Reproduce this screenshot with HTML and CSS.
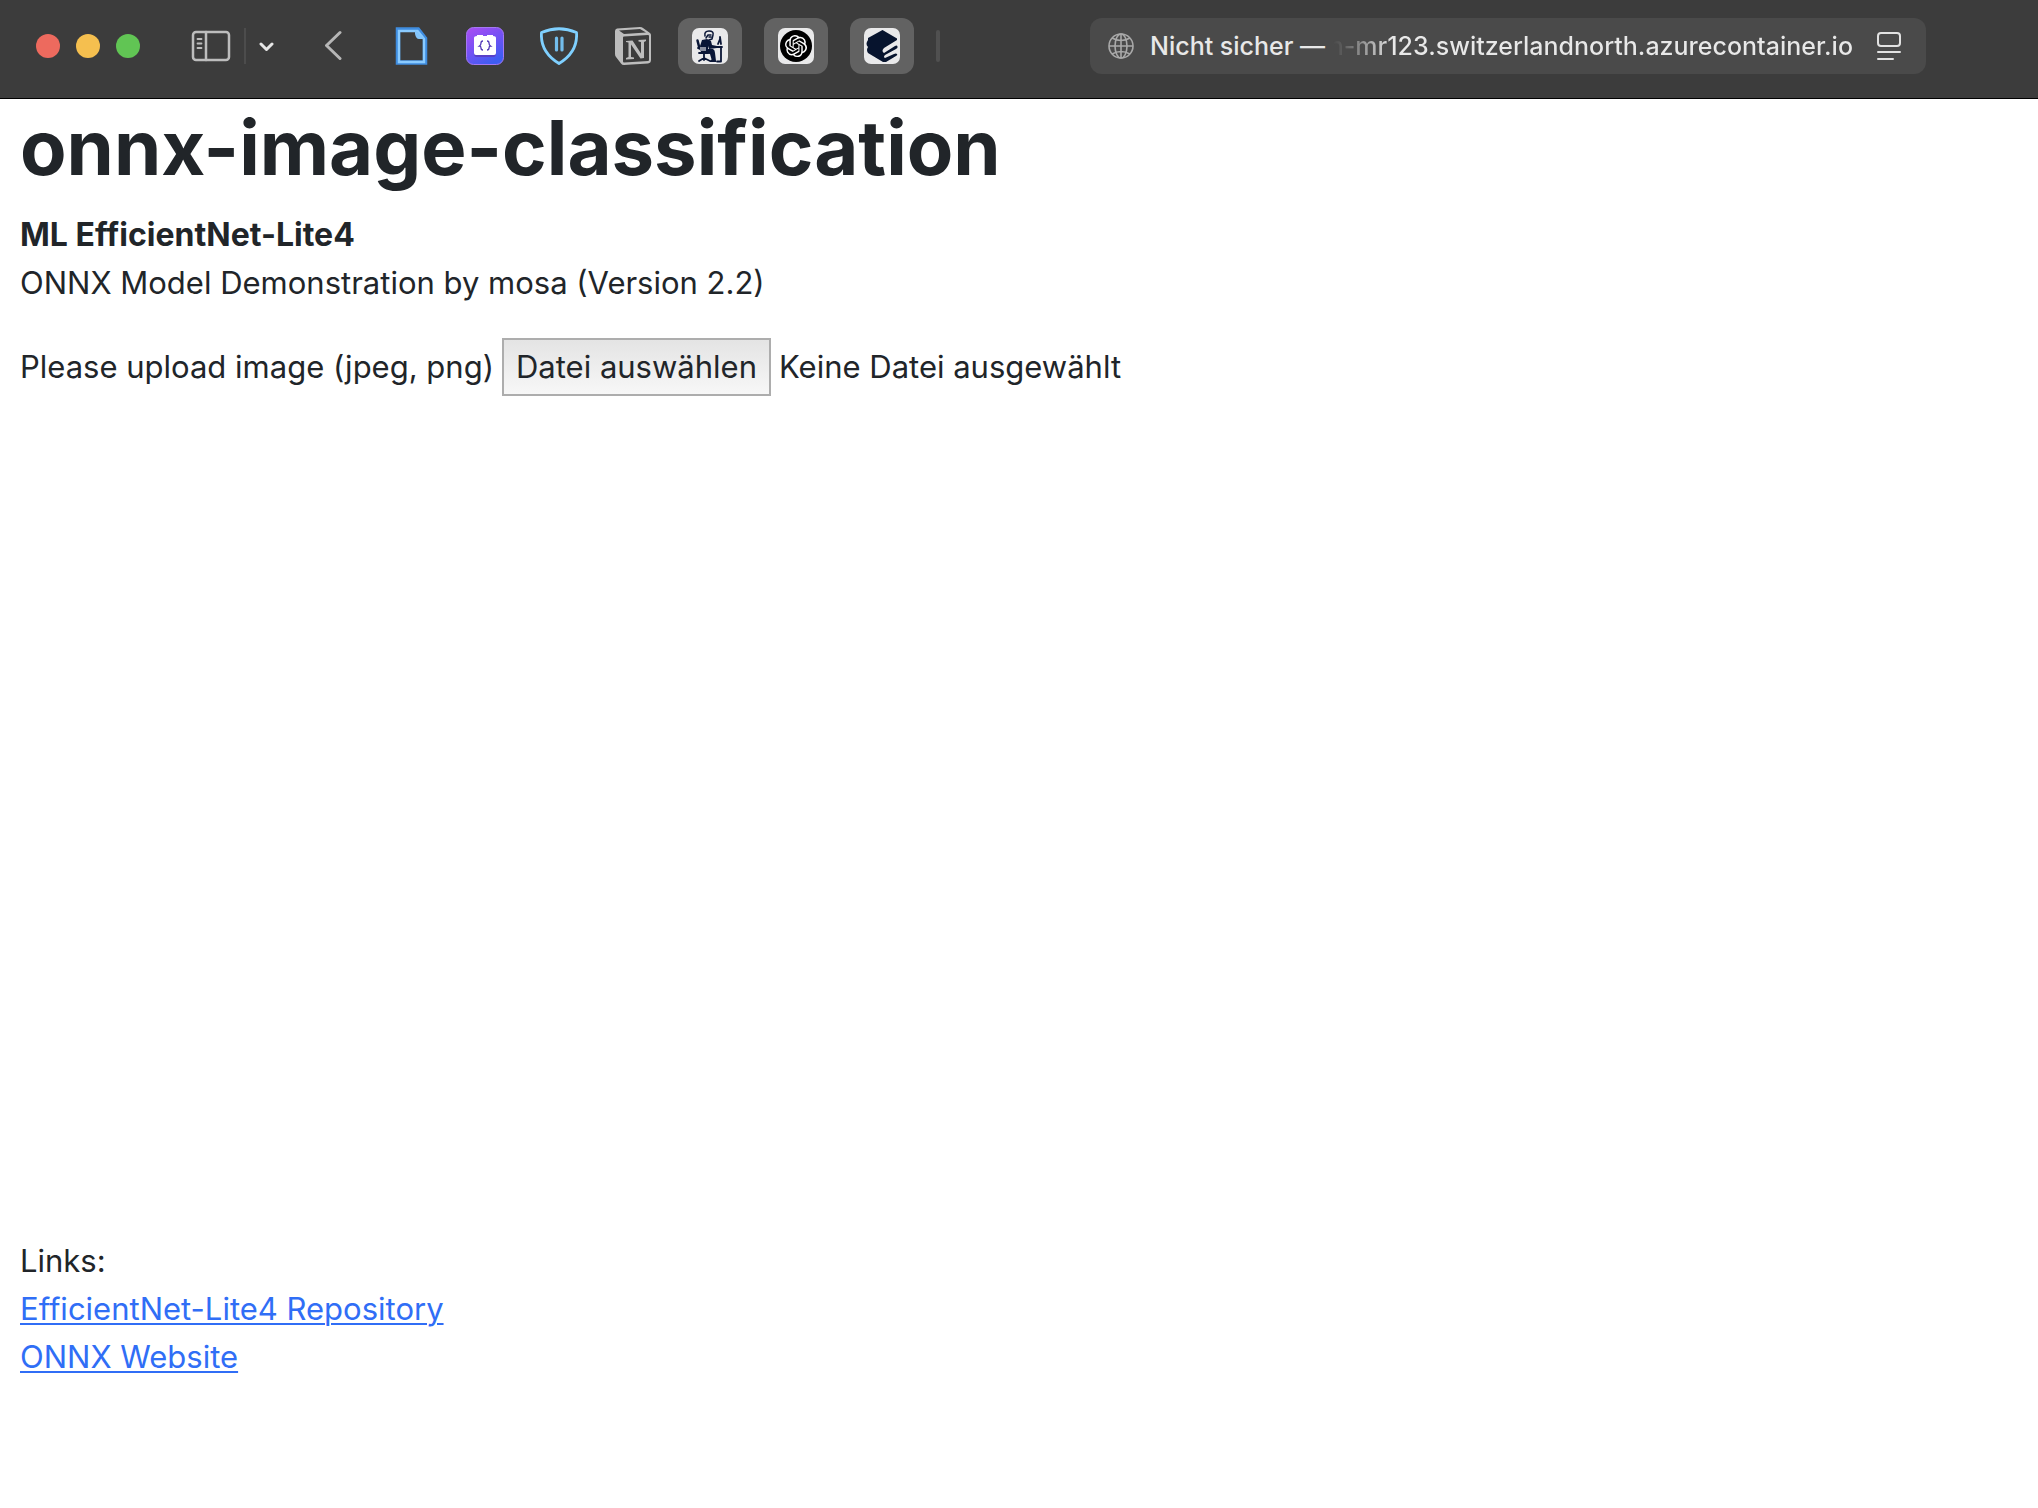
FILE: index.html
```html
<!DOCTYPE html>
<html lang="en">
<head>
<meta charset="utf-8">
<title>onnx-image-classification</title>
<link rel="stylesheet" href="styles.css">
</head>
<body>
<header class="toolbar">
  <div class="lights">
    <button class="light red" aria-label="Close"></button>
    <button class="light yellow" aria-label="Minimise"></button>
    <button class="light green" aria-label="Zoom"></button>
  </div>
  <div class="sidebar-group">
    <button class="tool" aria-label="Sidebar">
      <svg width="40" height="32" viewBox="0 0 40 32" fill="none" stroke="#bdbdbd" stroke-width="2.500" stroke-linecap="round"><rect x="2" y="2" width="36" height="28" rx="3"/><path d="M15 2v28"/><path d="M6.500 9h4M6.500 13.500h4M6.500 18h4" stroke-width="1.800"/></svg>
    </button>
    <span class="divider"></span>
    <button class="tool" aria-label="Tab groups">
      <svg width="16" height="36" viewBox="0 0 16 36" fill="none" stroke="#e6e6e6" stroke-width="3" stroke-linecap="round" stroke-linejoin="round"><path d="M2 16l5.500 5.500L13 16"/></svg>
    </button>
  </div>
  <button class="tool back" aria-label="Back">
    <svg width="18" height="32" viewBox="0 0 18 32" fill="none" stroke="#b6b6b6" stroke-width="3" stroke-linecap="round" stroke-linejoin="round"><path d="M15 2.500L1.500 15.500 15 28.500"/></svg>
  </button>
  <div class="extensions">
    <button class="tool" aria-label="Document">
      <svg width="38" height="38" viewBox="0 0 38 38" fill="none"><path d="M6 2.500H26l7 9v24H6z" stroke="#3f8de0" stroke-width="4.500"/><path d="M7 4h18.500l6.500 8v23H7z" stroke="#8acbff" stroke-width="2.400"/><path d="M23 3v4q1 5 4 5h6z" fill="#83c5fb"/></svg>
    </button>
    <button class="tool" aria-label="Snippets">
      <svg width="38" height="38" viewBox="0 0 38 38"><defs><linearGradient id="brick" x1="0" y1="0" x2=".6" y2="1"><stop offset="0" stop-color="#ad4df3"/><stop offset=".5" stop-color="#7950f4"/><stop offset="1" stop-color="#3e5df2"/></linearGradient></defs><rect x=".5" y=".5" width="37" height="37" rx="7" fill="url(#brick)" stroke="#a478f2"/><path d="M8 13h22v14q0 3-3 3H11q-3 0-3-3z" fill="#5840c8"/><path d="M8 11q0-2 3-2V8h6v1h4V8h6v1q3 0 3 2v15q0 2-2 2H10q-2 0-2-2z" fill="#fff"/><path d="M17 14q-2 0-2 2t-1.500 3q1.500 0 1.500 2t2 2M21 14q2 0 2 2t1.500 3q-1.500 0-1.500 2t-2 2" fill="none" stroke="#5137b8" stroke-width="1.300"/></svg>
    </button>
    <button class="tool" aria-label="Shield">
      <svg width="38" height="38" viewBox="0 0 38 38" fill="none" stroke="#7fd0ff" stroke-width="2.800" stroke-linejoin="round" stroke-linecap="round"><path d="M1.500 5.500Q19-2 36.500 5.500Q38 25 19 36.500Q0 25 1.500 5.500z"/><path d="M16.500 11v12M22 11v12" stroke-width="3.200" stroke="#73bdec"/></svg>
    </button>
    <button class="tool" aria-label="Notion">
      <svg width="38" height="38" viewBox="0 0 38 38"><path d="M3 1.500L26 0q2 0 3 1l7 5q1 1 1 2v25q0 3-3 3.500L10 38q-2 0-3-1.500L2 30q-1-1-1-3V4q0-2 2-2.500z" fill="#bdbdbd"/><path d="M5 3.500L26 2l6 3.500-22 1.500z" fill="#3c3c3c"/><path d="M9 10.500q0-1 1-1l24-1.500q1 0 1 1V33q0 1-1 1L10 35.500q-1 0-1-1z" fill="#3c3c3c"/><path d="M12 14l6.500-.5 8.500 13V15l-2.500-.5V13l7.500-.5V14l-2 1v16l-3.500.5L17 17.500V30l3 .5V32l-8 .5V31l2.500-1V15.500l-2.500-.5z" fill="#bdbdbd"/></svg>
    </button>
  </div>
  <div class="pins">
    <button class="pin" aria-label="Writer">
      <svg width="36" height="36" viewBox="0 0 36 36"><rect width="36" height="36" rx="7" fill="#e9e9ea"/><path d="M10 12l5-1 4 2 1 4 5 1v2l-8 1-1-3v3l5 0q2 1 2 4l1 8h-4l-2-7-9-1-1-7z" fill="#0a1636"/><g fill="none" stroke="#0a1636" stroke-linecap="round" stroke-linejoin="round"><path d="M13 8q-1-5 4-5t4 4l-1 4-3 1M14 10l2-3 3 0M17 9h2" stroke-width="1.500"/><path d="M5.500 12.500l2 8" stroke-width="2.500"/><path d="M6 20h9M7 25h9M12 26v6M7 33l5-3 6 3" stroke-width="1.800"/><path d="M22 19h8M29 20v13.500h-4M26 16l2-5v-2l1 7" stroke-width="1.800"/></g><path d="M8 19h6v4H8z" fill="#8d92a2"/><path d="M18 33q1-3 6 0v1h-6z" fill="#0a1636"/></svg>
    </button>
    <button class="pin" aria-label="ChatGPT">
      <svg width="36" height="36" viewBox="0 0 36 36"><rect width="36" height="36" rx="7" fill="#e9e9ea"/><circle cx="18" cy="18" r="16" fill="#000"/><g transform="translate(7 7) scale(.92)" fill="#fff"><path d="M22.280 9.820a5.980 5.980 0 0 0-.52-4.910 6.050 6.050 0 0 0-6.510-2.900A6.070 6.070 0 0 0 4.980 4.180a5.980 5.980 0 0 0-4 2.900 6.050 6.050 0 0 0 .74 7.100 5.980 5.980 0 0 0 .51 4.910 6.050 6.050 0 0 0 6.510 2.900A5.980 5.980 0 0 0 13.260 24a6.060 6.060 0 0 0 5.770-4.210 5.990 5.990 0 0 0 4-2.900 6.060 6.060 0 0 0-.75-7.070zm-9.020 12.610a4.480 4.480 0 0 1-2.880-1.040l.14-.08 4.780-2.760a.8.8 0 0 0 .39-.68v-6.740l2.020 1.170v5.620a4.500 4.500 0 0 1-4.450 4.510zM3.600 18.300a4.470 4.470 0 0 1-.54-3.010l.14.090 4.780 2.760a.77.77 0 0 0 .78 0l5.840-3.370v2.330l-4.860 2.840a4.500 4.500 0 0 1-6.140-1.640zM2.340 7.900a4.490 4.490 0 0 1 2.370-1.980v5.690a.77.77 0 0 0 .39.670l5.810 3.360-2.020 1.160-4.830-2.780A4.500 4.500 0 0 1 2.340 7.900zm16.600 3.850l-5.840-3.390 2.020-1.160 4.830 2.780a4.490 4.490 0 0 1-.68 8.100v-5.680a.79.79 0 0 0-.33-.65zm2.010-3.020l-.14-.09-4.770-2.780a.78.78 0 0 0-.79 0L9.410 9.230V6.900l4.830-2.790a4.500 4.500 0 0 1 6.710 4.620zM8.310 12.860l-2.020-1.160V6.070a4.500 4.500 0 0 1 7.370-3.450l-.14.080-4.780 2.760a.8.8 0 0 0-.39.680zm1.090-2.360L12 9l2.610 1.500v3L12 15l-2.600-1.500z"/></g></svg>
    </button>
    <button class="pin" aria-label="Books">
      <svg width="36" height="36" viewBox="0 0 36 36"><rect width="36" height="36" rx="7" fill="#e9e9ea"/><path d="M18.500 2L33 10.500v1.500L20 20q-3 3 0 5l11-7q2-1 2.500.5T32 21l-11 6q-2 2 0 3l9-4q2-1 3 0t-1 2l-10 6h-3L4 25q-2-3 0-6-3-3 0-7V10z" fill="#07142e"/></svg>
    </button>
  </div>
  <span class="grip"></span>
  <div class="address">
    <svg width="26" height="26" viewBox="0 0 26 26" fill="none" stroke="#a9a9a9" stroke-width="1.600"><circle cx="13" cy="13" r="12"/><ellipse cx="13" cy="13" rx="6" ry="12"/><path d="M13 1v24M1 13h24M4 5q9 5 18 0M4 21q9-5 18 0"/></svg>
    <span class="url"><span>Nicht sicher —</span><span class="host">n-mr123.switzerlandnorth.azurecontainer.io</span></span>
    <svg width="24" height="28" viewBox="0 0 24 28" fill="none" stroke="#e2e2e2" stroke-width="2" stroke-linecap="round"><rect x="1" y="1" width="22" height="13" rx="3"/><path d="M1 20h22M1 27h15"/></svg>
  </div>
</header>
<main class="page">
  <h1 class="title">onnx-image-classification</h1>
  <p class="intro"><strong>ML EfficientNet-Lite4</strong><br>ONNX Model Demonstration by mosa (Version 2.2)</p>
  <div class="upload">
    <label for="file">Please upload image (jpeg, png)</label>
    <input id="file" type="file" accept="image/jpeg,image/png" hidden>
    <button class="choose" type="button" onclick="document.getElementById('file').click()">Datei auswählen</button>
    <span>Keine Datei ausgewählt</span>
  </div>
  <div class="preview"></div>
  <div class="links">Links:<br><a href="#repository">EfficientNet-Lite4 Repository</a><br><a href="#website">ONNX Website</a></div>
</main>
</body>
</html>
```
FILE: styles.css
```css
* { box-sizing: border-box; }
body {
  margin: 0;
  background: #fff;
  color: #212529;
  font: 31px/48px Inter, "Liberation Sans", sans-serif;
}
button { margin: 0; padding: 0; border: 0; background: none; color: inherit; font: inherit; }
svg { display: block; flex: none; }
strong { font-size: 32px; }

.toolbar {
  display: flex;
  align-items: center;
  height: 99px;
  padding: 0 112px 7px 36px;
  background: #3c3c3c;
  border-bottom: 1px solid #000;
}
.lights { display: flex; gap: 16px; }
.light { width: 24px; height: 24px; border-radius: 50%; }
.red { background: #ed6a5e; }
.yellow { background: #f5bf4f; }
.green { background: #61c554; }
.sidebar-group { display: flex; align-items: center; margin-left: 51px; }
.divider { width: 2px; height: 36px; margin: 0 13px; background: #4c4c4c; }
.tool { flex: none; }
.back { margin-left: 50px; }
.extensions { display: flex; gap: 36px; margin-left: 49px; }
.pins { display: flex; gap: 22px; margin-left: 26px; }
.pin {
  display: flex;
  align-items: center;
  justify-content: center;
  width: 64px;
  height: 56px;
  border-radius: 12px;
  background: #626262;
}
.grip { flex: none; width: 4px; height: 32px; margin-left: 22px; border-radius: 2px; background: #505050; }
.address {
  display: flex;
  align-items: center;
  flex: 1;
  gap: 16px;
  height: 56px;
  margin-left: 150px;
  padding: 0 25px 0 18px;
  border-radius: 12px;
  background: #4a4a4a;
  color: #e8e8e8;
  font-size: 25px;
  font-weight: 500;
  white-space: nowrap;
}
.url { display: flex; flex: 1; justify-content: space-between; padding-right: 8px; }
.host {
  background: linear-gradient(90deg, #4a4a4a 4px, #626262 16px, #e8e8e8 64px);
  background-clip: text;
  color: transparent;
}

.page { padding: 0 20px; }
.title { margin: 0 0 16px; font-size: 76px; line-height: 96px; font-weight: 700; }
.intro { margin: 0 0 31px; }
.upload { display: flex; align-items: center; gap: 8px; }
.choose {
  height: 58px;
  padding: 0 12px;
  border: 2px solid #adadad;
  background: linear-gradient(#e4e4e4, #f7f7f7);
}
.preview { height: 841px; }
a { color: #306ef6; text-decoration-thickness: 2px; text-underline-offset: 3px; }
```
